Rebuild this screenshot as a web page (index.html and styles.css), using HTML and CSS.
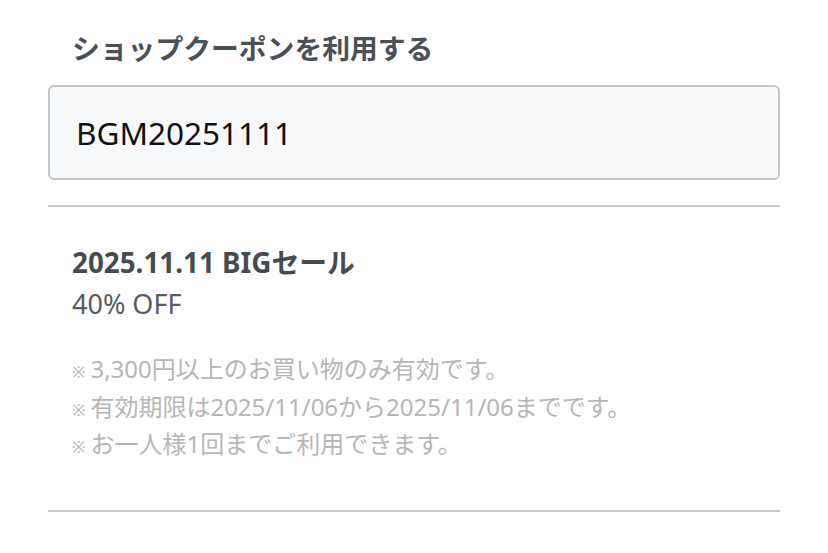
FILE: index.html
```html
<!DOCTYPE html>
<html lang="ja">

<head>
    <meta charset="UTF-8">
    <meta name="viewport" content="width=device-width, initial-scale=1.0">
    <title>ショップクーポン</title>
    <link rel="stylesheet" href="styles.css">
</head>

<body>
    <div class="coupon">
        <h2 class="coupon-title">ショップクーポンを利用する</h2>
        <div class="coupon-input">BGM20251111</div>
        <div class="coupon-detail">
            <p class="detail-name">2025.11.11 BIGセール</p>
            <p class="detail-off">40% OFF</p>
            <ul class="notes">
                <li><span class="mark">※</span>3,300円以上のお買い物のみ有効です。</li>
                <li><span class="mark">※</span>有効期限は2025/11/06から2025/11/06までです。</li>
                <li><span class="mark">※</span>お一人様1回までご利用できます。</li>
            </ul>
        </div>
    </div>
</body>

</html>
```

FILE: styles.css
```css
* {
    margin: 0;
    padding: 0;
    box-sizing: border-box;
}

html {
    background: #fff;
    font-family: "Noto Sans", "Noto Sans CJK JP", sans-serif;
}

.coupon {
    width: 732px;
    margin-left: 48px;
    padding-top: 29px;
}

.coupon-title {
    font-size: 27.8px;
    font-weight: 700;
    color: #4b5056;
    line-height: 38px;
    padding-left: 24px;
}

.coupon-input {
    margin-top: 18px;
    height: 95px;
    border: 2px solid #c3c6ca;
    border-radius: 6px;
    background: #f8f9fa;
    padding-left: 26px;
    display: flex;
    align-items: center;
    font-size: 31.5px;
    color: #111;
}

.coupon-detail {
    margin-top: 25px;
    border-top: 2px solid #c6c6c6;
    border-bottom: 2px solid #c6c6c6;
    padding: 37px 24px 47px;
}

.detail-name {
    font-size: 27.8px;
    font-weight: 700;
    color: #464b50;
    line-height: 36px;
}

.detail-off {
    font-size: 27px;
    color: #585c60;
    line-height: 40px;
    margin-top: 4px;
}

.notes {
    list-style: none;
    margin-top: 26px;
    font-size: 24px;
    color: #b6b6b6;
}

.notes li {
    display: flex;
    align-items: baseline;
    height: 37.5px;
    line-height: 37.5px;
}

.mark {
    font-size: 16px;
    margin-right: 5px;
}
```
